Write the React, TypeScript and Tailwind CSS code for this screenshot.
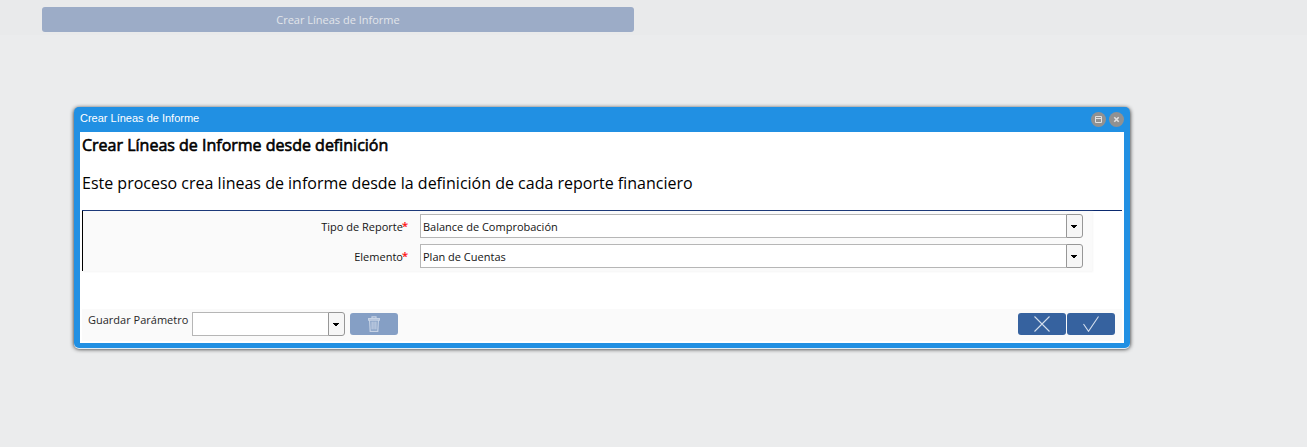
import React from "react";

function Combo({ value, className }: { value: string; className: string }) {
  return (
    <div className={`flex h-6 shrink-0 ${className}`}>
      <div className="min-w-0 flex-1 whitespace-nowrap border border-r-0 border-[#b6b6b6] bg-white pl-[2px] text-[11px] leading-[23px] text-[#141414]">
        {value}
      </div>
      <div className="flex w-[17px] rounded-r-[3px] border border-[#979797] bg-[#f6f6f6] pl-1 pt-[10px]">
        <svg width="6" height="3" viewBox="0 0 6 3" shapeRendering="crispEdges">
          <path d="M0 0h6v1H5v1H4v1H2V2H1V1H0z" fill="#000" />
        </svg>
      </div>
    </div>
  );
}

function Field({ label, value }: { label: string; value: string }) {
  return (
    <div className="flex h-[30px]">
      <div className="flex w-[325px] justify-end whitespace-nowrap text-[11px] leading-[25px] text-[#141414]">
        {label}
        <span className="-ml-px -mt-px text-[#f00] [-webkit-text-stroke:0.2px_#f00]">*</span>
      </div>
      <Combo value={value} className="ml-3 w-[663px]" />
    </div>
  );
}

export default function App() {
  return (
    <div className="h-[447px] w-[1307px] overflow-hidden bg-[#ebeced] font-['Open_Sans',sans-serif]">
      <div className="h-[35px] bg-[#e9eaeb] pl-[42px] pt-[7px]">
        <button className="block h-[25px] w-[592px] rounded-[3px] bg-[#9cacc7] text-center text-[11px] leading-[25px] text-[#e2e5ea]">
          Crear Líneas de Informe
        </button>
      </div>

      <section className="ml-[74px] mt-[72px] h-[241px] w-[1056px] rounded-[5px] bg-[#2190e3] px-[6px] shadow-[0_1px_0_#e3edf5,0_1px_4px_rgba(0,0,0,0.9)]">
        <header className="flex h-[25px] font-['Liberation_Sans',sans-serif] text-[11px] text-white">
          <h1 className="flex-1 leading-[22px]">Crear Líneas de Informe</h1>
          <div className="flex gap-[3px] pt-[5px]">
            <svg width="15" height="15" viewBox="0 0 15 15">
              <circle cx="7.5" cy="7.5" r="7.5" fill="#919191" />
              <path d="M4.5 4.5h6v6h-6zM4.5 6.5h6" fill="none" stroke="#e2e2e2" />
            </svg>
            <svg width="15" height="15" viewBox="0 0 15 15">
              <circle cx="7.5" cy="7.5" r="7.5" fill="#919191" />
              <path d="M5.3 5.3l4.4 4.4M9.7 5.3l-4.4 4.4" stroke="#e2e2e2" strokeWidth="1.6" />
            </svg>
          </div>
        </header>

        <div className="flex h-[211px] flex-col bg-white px-[2px] text-black">
          <h2 className="h-[38px] whitespace-nowrap text-[16px] leading-[26px] [-webkit-text-stroke:0.6px_black]">
            Crear Líneas de Informe desde definición
          </h2>
          <p className="h-[40px] whitespace-nowrap text-[16px] leading-[26px]">
            Este proceso crea lineas de informe desde la definición de cada reporte financiero
          </p>
          <div className="h-[61px] border-t border-[#0b2a6f]">
            <div className="h-[60px] w-[1010px] border-l border-black bg-[#fafafa] pt-[3px] shadow-[1px_1px_2px_#f5f5f5]">
              <Field label="Tipo de Reporte" value="Balance de Comprobación" />
              <Field label="Elemento" value="Plan de Cuentas" />
            </div>
          </div>
          <footer className="mt-[38px] flex h-8 bg-[#fafafa] pl-[6px] pr-[7px] pt-[3px]">
            <span className="w-[104px] whitespace-nowrap text-[11px] leading-[16px] text-[#282828]">Guardar Parámetro</span>
            <Combo value="" className="w-[153px]" />
            <button className="ml-[5px] mt-px flex h-[22px] w-12 items-center justify-center rounded-[3px] bg-[#859fc5]">
              <svg width="12" height="16" viewBox="0 0 12 16" fill="none" stroke="#c7d3e5" strokeWidth="1.2">
                <path d="M.6 2.6h10.8v1.6H.6zM4 2.4V.8h4v1.6M1.6 4.5l.6 10.8h7.6l.6-10.8M4.1 5.5v8M6 5.5v8M7.9 5.5v8" />
              </svg>
            </button>
            <div className="ml-auto mt-px flex gap-px">
              <button className="flex h-[22px] w-12 items-center justify-center rounded-[3px] bg-[#36629f]">
                <svg width="16" height="16" viewBox="0 0 16 16">
                  <path d="M.5.5l15 15M15.5.5l-15 15" stroke="#d3deed" strokeWidth="1.1" />
                </svg>
              </button>
              <button className="flex h-[22px] w-12 items-center justify-center rounded-[3px] bg-[#36629f]">
                <svg width="16" height="16" viewBox="0 0 16 16">
                  <path d="M.5 8l5 7.3L15.5.5" fill="none" stroke="#d3deed" strokeWidth="1.1" />
                </svg>
              </button>
            </div>
          </footer>
        </div>
      </section>
    </div>
  );
}
